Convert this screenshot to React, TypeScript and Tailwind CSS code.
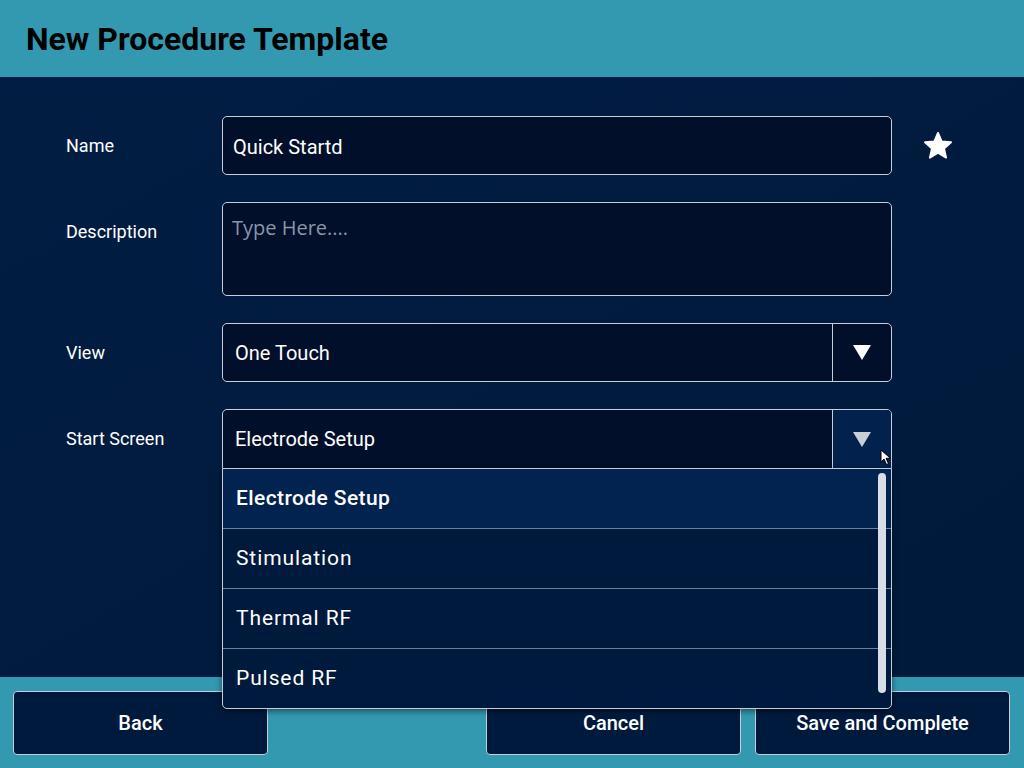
import React from 'react';

const items = ['Electrode Setup', 'Stimulation', 'Thermal RF', 'Pulsed RF'];

const Caret: React.FC<{ dim?: boolean }> = ({ dim }) => (
  <svg width="18" height="15" viewBox="0 0 18 15">
    <path d="M0 0 H18 L9 15 Z" fill={dim ? '#c9cfd9' : '#ffffff'} />
  </svg>
);

const labelCls = 'flex h-[59px] w-[222px] items-center pl-[66px] text-[18px] text-white';
const btnCls = 'h-[64px] w-[255px] rounded-[4px] border border-[#c7ced9] bg-[#001a3d] pt-[1px] text-[20px] font-medium text-white';

export default function App() {
  return (
    <div className="flex h-[768px] w-[1024px] flex-col overflow-hidden bg-[#001a3d] font-['Roboto',sans-serif]">
      <header className="flex h-[77px] items-center bg-[#3399b0] px-[26px]">
        <h1 className="text-[32px] font-bold text-black">New Procedure Template</h1>
      </header>

      <main className="relative flex-1 bg-gradient-to-br from-[#011d42] to-[#001a3b] pt-[39px]">
        <div className="flex flex-col gap-[27px]">
          <div className="flex items-start">
            <label className={labelCls}>Name</label>
            <div className="flex h-[59px] w-[670px] items-center rounded-[5px] border border-[#c7ced9] bg-[#020f2a] pl-[10px] pt-[2px] text-[20px] text-white">
              Quick Startd
            </div>
            <div className="flex h-[59px] flex-1 items-center pl-[30px]">
              <svg width="32" height="30" viewBox="0 0 24 23">
                <path
                  d="M12 1.5 L14.9 8.1 L22 8.7 L16.6 13.4 L18.2 20.4 L12 16.7 L5.8 20.4 L7.4 13.4 L2 8.7 L9.1 8.1 Z"
                  fill="#ffffff"
                  stroke="#ffffff"
                  strokeWidth="1.5"
                  strokeLinejoin="round"
                />
              </svg>
            </div>
          </div>

          <div className="flex items-start">
            <label className={labelCls}>Description</label>
            <div className="h-[94px] w-[670px] rounded-[5px] border border-[#c7ced9] bg-[#020f2a] pl-[9px] pt-[10px] font-['Open_Sans',sans-serif] text-[20px] text-[#8a95a8]">
              Type Here....
            </div>
          </div>

          <div className="flex items-start">
            <label className={labelCls}>View</label>
            <div className="flex h-[59px] w-[670px] overflow-hidden rounded-[5px] border border-[#c7ced9] bg-[#020f2a]">
              <div className="flex flex-1 items-center pl-[12px] text-[20px] text-white">One Touch</div>
              <div className="flex w-[59px] items-center justify-center border-l border-[#c7ced9]">
                <Caret />
              </div>
            </div>
          </div>

          <div className="flex items-start">
            <label className={labelCls}>Start Screen</label>
            <div className="relative w-[670px]">
              <div className="flex h-[60px] overflow-hidden rounded-t-[5px] border border-[#c7ced9] bg-[#020f2a]">
                <div className="flex flex-1 items-center pl-[12px] text-[20px] text-white">Electrode Setup</div>
                <div className="flex w-[59px] items-center justify-center border-l border-[#c7ced9] bg-[#02214d]">
                  <Caret dim />
                </div>
              </div>
              <div className="absolute left-0 top-[59px] z-10 w-[670px] overflow-hidden rounded-b-[5px] border border-[#c7ced9] bg-[#001a3d] shadow-[0_2px_6px_rgba(0,0,0,0.5)]">
                {items.map((item, i) => (
                  <div
                    key={item}
                    className={
                      i === 0
                        ? 'flex h-[59px] items-center bg-[#02224f] pl-[13px] text-[21px] font-medium tracking-[0.4px] text-white'
                        : 'flex h-[60px] items-center border-t border-[#6d7d9b] pl-[13px] text-[21px] tracking-[0.9px] text-white'
                    }
                  >
                    {item}
                  </div>
                ))}
                <div className="absolute right-[5px] top-[4px] h-[220px] w-[8px] rounded-full bg-[#d8dde8]" />
              </div>
              <svg className="absolute left-[658px] top-[40px] z-20" width="14" height="18" viewBox="0 0 14 18">
                <path d="M1 1 L1 13 L4 10 L6.5 15.5 L8.5 14.6 L6 9.3 L10.5 9.3 Z" fill="#ffffff" stroke="#000000" strokeWidth="1" />
              </svg>
            </div>
          </div>
        </div>
      </main>

      <footer className="flex h-[91px] items-center gap-[14px] bg-[#3399b0] pl-[13px] pr-[14px]">
        <button className={btnCls}>Back</button>
        <div className="flex-1" />
        <button className={btnCls}>Cancel</button>
        <button className={btnCls}>Save and Complete</button>
      </footer>
    </div>
  );
}
